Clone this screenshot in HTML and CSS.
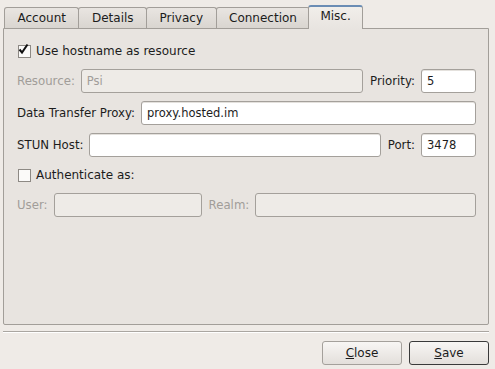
FILE: index.html
```html
<!DOCTYPE html>
<html lang="en">
<head>
    <meta charset="UTF-8">
    <title>Account Properties</title>
    <link rel="stylesheet" href="styles.css">
</head>
<body>
    <div class="dialog">
        <div class="tabs">
            <div class="tab">Account</div>
            <div class="tab">Details</div>
            <div class="tab">Privacy</div>
            <div class="tab">Connection</div>
            <div class="tab active">Misc.</div>
        </div>

        <div class="pane">
            <div class="check-row">
                <span class="checkbox">
                    <svg width="13" height="13" viewBox="0 0 13 13"><path d="M2.5 6.5 L5 9.5 L10.5 1.5" fill="none" stroke="#111" stroke-width="2"/></svg>
                </span>
                <span>Use hostname as resource</span>
            </div>

            <div class="row">
                <span class="label disabled">Resource:</span>
                <div class="field grow disabled">Psi</div>
                <span class="label">Priority:</span>
                <div class="field small">5</div>
            </div>

            <div class="row">
                <span class="label">Data Transfer Proxy:</span>
                <div class="field grow">proxy.hosted.im</div>
            </div>

            <div class="row">
                <span class="label">STUN Host:</span>
                <div class="field grow"></div>
                <span class="label">Port:</span>
                <div class="field small">3478</div>
            </div>

            <div class="check-row">
                <span class="checkbox"></span>
                <span>Authenticate as:</span>
            </div>

            <div class="row">
                <span class="label disabled">User:</span>
                <div class="field user disabled"></div>
                <span class="label disabled">Realm:</span>
                <div class="field grow disabled"></div>
            </div>
        </div>

        <div class="separator"></div>

        <div class="buttons">
            <div class="btn"><u>C</u>lose</div>
            <div class="btn default"><u>S</u>ave</div>
        </div>
    </div>
</body>
</html>
```

FILE: styles.css
```css
body {
    margin: 0;
    background-color: #efebe7;
    font-family: "DejaVu Sans", sans-serif;
    font-size: 12px;
    color: #1c1c1c;
}
.dialog {
    height: 369px;
    display: flex;
    flex-direction: column;
    padding: 5px 6px 4px 3px;
    box-sizing: border-box;
}

/* tab bar */
.tabs {
    display: flex;
    align-items: flex-end;
    height: 23px;
    padding-left: 1px;
}
.tab {
    height: 21px;
    line-height: 20px;
    padding: 0 12.5px;
    box-sizing: border-box;
    border: 1px solid #a29e99;
    border-bottom: none;
    border-radius: 3px 3px 0 0;
    margin-left: -1px;
    background: linear-gradient(#e9e5e1, #d9d5d0);
}
.tab:first-child {
    margin-left: 0;
}
.tab.active {
    position: relative; /* sits over the pane border */
    z-index: 1;
    height: 24px;
    line-height: 19px;
    padding: 0 11px 3px;
    margin-left: -2px;
    margin-bottom: -1px;
    border-top: 2px solid #6a8cb4;
    background: linear-gradient(#f1eeea, #e8e4e0);
}

/* page */
.pane {
    flex: 1;
    display: flex;
    flex-direction: column;
    gap: 8px;
    padding: 12px 12px 0 13px;
    border: 1px solid #a29e99;
    border-radius: 0 0 2px 2px;
    background-color: #e8e4e0;
}
.check-row {
    display: flex;
    align-items: center;
    gap: 5px;
    height: 20px;
}
.checkbox {
    width: 13px;
    height: 13px;
    margin-left: 1px;
    box-sizing: border-box;
    border: 1px solid #8d8984;
    background-color: #fbfaf9;
    display: flex;
}
.checkbox svg {
    margin: -3px 0 0 -2px;
}
.row {
    display: flex;
    align-items: center;
    gap: 7px;
    height: 24px;
    font-size: 11.5px;
}
.label {
    white-space: nowrap;
    margin-right: -1px;
    font-size: 11.75px;
}
.disabled {
    color: #a19d99;
}
.field {
    height: 24px;
    line-height: 22px;
    box-sizing: border-box;
    padding: 0 5px;
    border: 1px solid #a4a09b;
    border-radius: 3px;
    background-color: #fff;
    box-shadow: inset 0 1px 0 #e4e1dd;
}
.field.disabled {
    background-color: #eeebe7;
    box-shadow: none;
}
.grow {
    flex: 1;
}
.small {
    width: 55px;
}
.user {
    width: 148px;
}

/* bottom */
.separator {
    margin-top: 6px;
    border-top: 1px solid #aaa6a1;
    border-bottom: 1px solid #fff;
}
.buttons {
    display: flex;
    justify-content: flex-end;
    gap: 7px;
    margin-top: 8px;
}
.btn {
    width: 80px;
    height: 24px;
    line-height: 22px;
    box-sizing: border-box;
    text-align: center;
    border: 1px solid #a4a09b;
    border-radius: 3px;
    background: linear-gradient(#f8f6f4, #e3dfdb);
}
.btn.default {
    border-color: #3a3a3a;
}
```
